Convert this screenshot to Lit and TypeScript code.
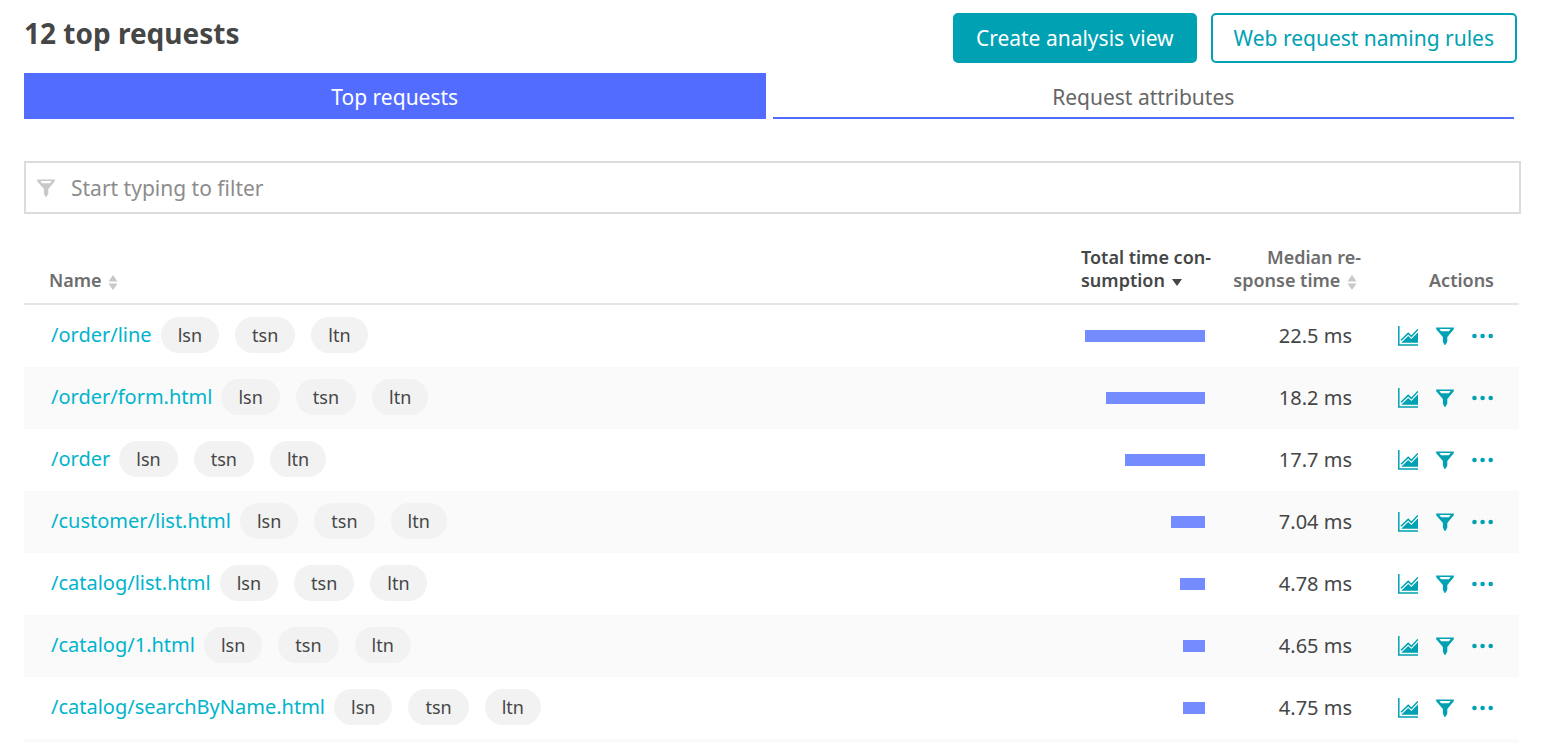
import { LitElement, html, css, svg } from "lit";
import { customElement, state } from "lit/decorators.js";
import { classMap } from "lit/directives/class-map.js";

interface RequestRow {
  name: string;
  share: number;
  median: string;
}

const TAGS = ["lsn", "tsn", "ltn"];

const ROWS: RequestRow[] = [
  { name: "/order/line", share: 120, median: "22.5 ms" },
  { name: "/order/form.html", share: 99, median: "18.2 ms" },
  { name: "/order", share: 80, median: "17.7 ms" },
  { name: "/customer/list.html", share: 34, median: "7.04 ms" },
  { name: "/catalog/list.html", share: 25, median: "4.78 ms" },
  { name: "/catalog/1.html", share: 22, median: "4.65 ms" },
  { name: "/catalog/searchByName.html", share: 22, median: "4.75 ms" },
];

const MAX_SHARE = 120;

const chartIcon = svg`<svg width="20" height="20" viewBox="0 0 20 20" aria-hidden="true">
  <path d="M.8 0v19.1H20" fill="none" stroke="currentColor" stroke-width="1.5"/>
  <path d="M3 14.200l7.200-6.800 3.200 3L19.800 3.400" fill="none" stroke="currentColor" stroke-width="1.500"/>
  <path d="M3.200 16.800L10.200 10l3.200 3.100L20 6.200v10.600z" fill="currentColor"/>
</svg>`;

const funnelIcon = svg`<svg width="18" height="18" viewBox="0 0 18 18" aria-hidden="true">
  <path fill="currentColor" fill-rule="evenodd" d="M.2.500h17.600v1.700L11.300 10v4.500L9.700 17.700H8.300L6.900 14.500V10L.2 2.200zM3.300 2l1.800 2.200h7.800L14.700 2z"/>
</svg>`;

const dotsIcon = svg`<svg width="22" height="6" viewBox="0 0 22 6" aria-hidden="true">
  <circle cx="2.500" cy="3" r="2.300" fill="currentColor"/>
  <circle cx="10.600" cy="3" r="2.300" fill="currentColor"/>
  <circle cx="18.700" cy="3" r="2.300" fill="currentColor"/>
</svg>`;

const sortIcon = svg`<svg class="sort" width="10" height="15" viewBox="0 0 10 15" aria-hidden="true">
  <path d="M5 0l4.500 6.500h-9zM.5 8.500h9L5 15z" fill="#c8c8c8"/>
</svg>`;

const sortedIcon = svg`<svg class="sort" width="10" height="15" viewBox="0 0 10 15" aria-hidden="true">
  <path d="M0 4h10L5 11z" fill="#454646"/>
</svg>`;

@customElement("app-root")
export class AppRoot extends LitElement {
  static styles = css`
    :host {
      display: flex;
      flex-direction: column;
      box-sizing: border-box;
      height: 100vh;
      overflow: hidden;
      padding: 12px 20px 0 24px;
      background: #fff;
      color: #454646;
      font-family: "Noto Sans", sans-serif;
      font-size: 20px;
      line-height: 26px;
    }
    button {
      font: inherit;
      color: inherit;
      background: none;
      border: 0;
      margin: 0;
      padding: 0;
      cursor: pointer;
    }
    .head {
      display: flex;
      align-items: flex-start;
      justify-content: space-between;
      padding-right: 4px;
    }
    h1 {
      margin: 0;
      font-size: 28px;
      line-height: 42px;
      font-weight: 700;
    }
    .buttons {
      display: flex;
      gap: 14px;
      padding-top: 1px;
    }
    .buttons button {
      height: 50px;
      padding: 0 21px;
      border: 2px solid #00a1b2;
      border-radius: 5px;
      color: #00a1b2;
      font-size: 21px;
    }
    .buttons .primary {
      background: #00a1b2;
      color: #fff;
    }
    .tabs {
      display: grid;
      grid-template-columns: 1fr 1fr;
      gap: 7px;
      margin-top: 10px;
      padding-right: 7px;
    }
    .tab {
      height: 46px;
      padding-top: 3px;
      border-bottom: 2px solid #526cff;
      color: #666;
      font-size: 21px;
    }
    .tab.active {
      background: #526cff;
      color: #fff;
    }
    .filter {
      display: flex;
      align-items: center;
      gap: 16px;
      margin-top: 42px;
      padding: 0 11px;
      height: 49px;
      border: 2px solid #dcdcdc;
      color: #c8c8c8;
    }
    .filter input {
      flex: 1;
      min-width: 0;
      height: 100%;
      box-sizing: border-box;
      padding: 0;
      border: 0;
      outline: 0;
      background: none;
      color: #454646;
      font: inherit;
      font-size: 21px;
    }
    .filter input::placeholder {
      color: #8c8c8c;
      opacity: 1;
    }
    .list {
      flex: 1;
      display: flex;
      flex-direction: column;
      margin: 25px 2px 0 0;
    }
    table {
      width: 100%;
      table-layout: fixed;
      border-collapse: collapse;
    }
    .col-total { width: 146px; }
    .col-median { width: 156px; }
    .col-actions { width: 158px; }
    th {
      height: 65px;
      padding: 0 0 11px;
      vertical-align: bottom;
      text-align: left;
      border-bottom: 2px solid #e6e6e6;
      font-size: 18px;
      line-height: 23px;
      font-weight: 600;
      color: #6d6d6d;
      box-sizing: border-box;
      white-space: nowrap;
    }
    th:first-child { padding-left: 25px; }
    th:nth-child(2) { padding-left: 22px; color: #454646; }
    th:nth-child(3) { text-align: right; }
    th:nth-child(4) { text-align: right; padding-right: 25px; }
    th button { text-align: inherit; }
    .sort {
      margin: 0 4px 0 2px;
      vertical-align: -3px;
    }
    td {
      height: 62px;
      padding: 0;
      vertical-align: middle;
    }
    tbody tr:nth-child(even), .next {
      background: #fafafa;
    }
    .name {
      display: flex;
      align-items: center;
      padding: 0 0 2px 27px;
    }
    a {
      color: #00b4cc;
      text-decoration: none;
    }
    .tags {
      display: flex;
      gap: 16px;
      margin-left: 9px;
    }
    .tag {
      padding: 0 17px;
      border-radius: 18px;
      background: #f2f2f2;
      font-size: 18px;
      line-height: 36px;
    }
    .track {
      width: 120px;
      margin-left: auto;
    }
    .bar {
      height: 12px;
      margin-left: auto;
      background: #748cff;
    }
    .median {
      text-align: right;
      padding-right: 9px;
    }
    .actions {
      display: flex;
      align-items: center;
      justify-content: flex-end;
      gap: 18px;
      padding-right: 25px;
      color: #00a1b2;
    }
    .actions button { display: flex; }
    svg { flex: none; }
    .next { flex: 1; }
  `;

  @state() private tab = 0;

  render() {
    return html`
      <header class="head">
        <h1>12 top requests</h1>
        <div class="buttons">
          <button class="primary">Create analysis view</button>
          <button>Web request naming rules</button>
        </div>
      </header>
      <div class="tabs" role="tablist">
        ${["Top requests", "Request attributes"].map(
          (label, i) => html`<button
            role="tab"
            aria-selected=${this.tab === i}
            class=${classMap({ tab: true, active: this.tab === i })}
            @click=${() => (this.tab = i)}
          >${label}</button>`
        )}
      </div>
      <label class="filter">
        ${funnelIcon}
        <input type="text" aria-label="Filter" placeholder="Start typing to filter" />
      </label>
      <div class="list">
        <table>
          <colgroup>
            <col />
            <col class="col-total" />
            <col class="col-median" />
            <col class="col-actions" />
          </colgroup>
          <thead>
            <tr>
              <th><button>Name ${sortIcon}</button></th>
              <th><button>Total time con-<br />sumption ${sortedIcon}</button></th>
              <th><button>Median re-<br />sponse time ${sortIcon}</button></th>
              <th>Actions</th>
            </tr>
          </thead>
          <tbody>
            ${ROWS.map((row) => this.renderRow(row))}
          </tbody>
        </table>
        <div class="next"></div>
      </div>
    `;
  }

  private renderRow(row: RequestRow) {
    return html`<tr>
      <td>
        <div class="name">
          <a href="#">${row.name}</a>
          <div class="tags">${TAGS.map((t) => html`<span class="tag">${t}</span>`)}</div>
        </div>
      </td>
      <td>
        <div class="track">
          <div class="bar" style="width:${(row.share / MAX_SHARE) * 100}%"></div>
        </div>
      </td>
      <td class="median">${row.median}</td>
      <td>
        <div class="actions">
          <button aria-label="Show chart">${chartIcon}</button>
          <button aria-label="Filter">${funnelIcon}</button>
          <button aria-label="More">${dotsIcon}</button>
        </div>
      </td>
    </tr>`;
  }
}
